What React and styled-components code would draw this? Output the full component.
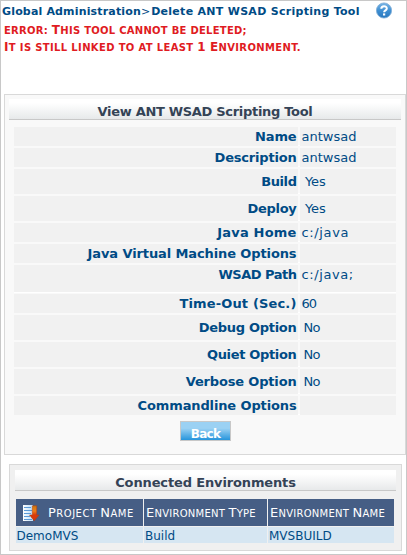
import React from 'react';
import styled, { createGlobalStyle } from 'styled-components';

const GlobalStyle = createGlobalStyle`
  * { box-sizing: border-box; }
  body { margin: 0; background: #fff; }
`;

const Page = styled.main`
  width: 407px;
  height: 555px;
  border: 1px solid #c8c8c8;
  font: 13px/18px Verdana, "DejaVu Sans", sans-serif;
  color: #004b85;
  overflow: hidden;
  white-space: nowrap;
`;
const TopBar = styled.header`
  display: flex;
  align-items: flex-start;
  height: 20px;
  padding-left: 1px;
  font-size: 11px;
  line-height: 20px;
`;
const Crumb = styled.b`
  padding-top: 1px;
  letter-spacing: ${(p) => p.$ls}px;
`;
const Separator = styled.span`
  padding-top: 1px;
  letter-spacing: 0.9px;
`;
const HelpButton = styled.a`
  display: flex;
  margin: 1px 0 0 16px;
`;
const ErrorBox = styled.div`
  height: 73px;
  padding: 1px 0 0 3px;
  font-size: 12px;
  font-weight: bold;
  line-height: 16px;
  color: #e01b22;
`;
const CapsLine = styled.span`
  display: ${(p) => (p.$block ? 'block' : 'inline')};
  letter-spacing: ${(p) => p.$ls}px;
`;
const Small = styled.span`
  font-size: ${(p) => p.$size}px;
  text-transform: uppercase;
`;
const Panel = styled.section`
  width: 402px;
  height: 361px;
  margin-left: 3px;
  padding: 4px;
  border: 1px solid #d9d9d9;
  background: #f9f9f9;
`;
const PanelTitle = styled.h2`
  margin: 0;
  height: ${(p) => p.$h}px;
  padding-top: 4px;
  border-bottom: 1px solid #c8c8c8;
  background: linear-gradient(#fff 20%, #e7e9ea);
  text-align: center;
  font-size: 13px;
  line-height: 18px;
  color: #344356;
  letter-spacing: ${(p) => p.$ls}px;
`;
const Fields = styled.dl`
  margin: 7px 5px 0;
`;
const Field = styled.div`
  display: grid;
  grid-template-columns: 284px 96px;
  column-gap: 2px;
  height: ${(p) => p.$h + 1}px;
  margin-bottom: ${(p) => (p.$tight ? 1 : 2)}px;
  border-bottom: 1px solid #fff;
  line-height: ${(p) => (p.$top ? 18 : p.$h)}px;
`;
const Label = styled.dt`
  padding: 1px 1.5px 0 0;
  background: #f1f1f1;
  font-weight: bold;
  text-align: right;
  letter-spacing: ${(p) => p.$ls}px;
`;
const Value = styled.dd`
  margin: 0;
  padding: 1px 0 0 ${(p) => p.$pad}px;
  background: #f1f1f1;
  letter-spacing: ${(p) => p.$ls}px;
`;
const BackButton = styled.button`
  display: block;
  width: 51px;
  height: 20px;
  margin: 6px 0 0 171px;
  padding: 4px 0 0 0;
  border: 1px solid #c8c8c8;
  background: linear-gradient(#9bd1f3 35%, #2795dc);
  color: #fff;
  font: bold 12px/16px Verdana, "DejaVu Sans", sans-serif;
  letter-spacing: -0.7px;
`;
const EnvPanel = styled.section`
  width: 393px;
  height: 87px;
  margin: 9px 0 0 8px;
  padding: 5px;
  border: 1px solid #d9d9d9;
  background: #f0f0f0;
`;
const EnvTable = styled.div`
  display: grid;
  grid-template-columns: 127px 123px 126px;
  grid-template-rows: 27px 16px;
  gap: 1px;
  margin: 8px 0 0 1px;
`;
const HeadCell = styled.div`
  display: flex;
  align-items: center;
  padding: 2px 0 0 ${(p) => p.$pad}px;
  background: #465e85;
  color: #fff;
`;
const Cell = styled.div`
  padding: 1px 0 0 ${(p) => p.$pad}px;
  background: #d6e6f2;
  font-size: 12px;
  line-height: 16px;
`;
const SortSvg = styled.svg`
  flex: none;
  margin: -2px 8px 0 6px;
`;

function SmallCaps({ text, size, ls, block }) {
  return (
    <CapsLine $ls={ls} $block={block}>
      {text.split(/([A-Z0-9]+)/).map((s, i) => (i % 2 ? s : s && <Small key={i} $size={size}>{s}</Small>))}
    </CapsLine>
  );
}

function HelpIcon() {
  return (
    <svg width="16" height="17" viewBox="0 0 16 17">
      <defs>
        <linearGradient id="help" x1="0" y1="0" x2="0" y2="1">
          <stop offset="0" stopColor="#79b5e6" />
          <stop offset=".5" stopColor="#3f8fd2" />
          <stop offset="1" stopColor="#2877be" />
        </linearGradient>
      </defs>
      <circle cx="8" cy="8.5" r="7.6" fill="url(#help)" stroke="#7eacd6" strokeWidth=".8" />
      <path d="M5.3 6.8C5.3 3.3 10.8 3.4 10.8 6.4C10.8 8.3 8.2 8.3 8.1 10.2" fill="none" stroke="#fff" strokeWidth="2" />
      <rect x="7" y="11.4" width="2.2" height="2.1" fill="#fff" />
    </svg>
  );
}

function SortIcon() {
  return (
    <SortSvg width="18" height="18" viewBox="0 0 18 18">
      <defs>
        <linearGradient id="arrow" x1="0" y1="0" x2="0" y2="1">
          <stop offset="0" stopColor="#c9790f" />
          <stop offset=".35" stopColor="#ee7d18" />
          <stop offset=".6" stopColor="#d83c0c" />
          <stop offset="1" stopColor="#d93408" />
        </linearGradient>
        <linearGradient id="sheet">
          <stop offset="0" stopColor="#fff" />
          <stop offset="1" stopColor="#b9dcf7" />
        </linearGradient>
      </defs>
      <rect x="1" y="1" width="10" height="16" fill="url(#sheet)" />
      <path d="M2 3.5H9M2 6.5H10M2 9.5H9M2 12.5H8M2 15.5H10" stroke="#5c9bd8" />
      <path d="M10.3 1.8H14.7V11H17L12.2 16.8L7.5 11H10.3Z" fill="url(#arrow)" stroke="#b83a0a" strokeWidth=".5" />
    </SortSvg>
  );
}

const fields = [
  { label: 'Name', ls: -0.13, value: 'antwsad', vls: 0, h: 18 },
  { label: 'Description', ls: -0.2, value: 'antwsad', vls: 0, h: 18 },
  { label: 'Build', ls: -0.44, value: 'Yes', vls: -0.1, h: 24, pad: 5 },
  { label: 'Deploy', ls: -0.3, value: 'Yes', vls: -0.1, h: 24, pad: 5 },
  { label: 'Java Home', ls: 0.19, value: 'c:/java', vls: 0.65, h: 18 },
  { label: 'Java Virtual Machine Options', ls: -0.11, value: '', h: 18 },
  { label: 'WSAD Path', ls: -0.49, value: 'c:/java;', vls: 0.6, h: 27, top: true, tight: true },
  { label: 'Time-Out (Sec.)', ls: 0.15, value: '60', vls: -1, h: 18 },
  { label: 'Debug Option', ls: -0.28, value: 'No', vls: -0.8, h: 24, pad: 3.5 },
  { label: 'Quiet Option', ls: -0.33, value: 'No', vls: -0.8, h: 24, pad: 3.5 },
  { label: 'Verbose Option', ls: -0.17, value: 'No', vls: -0.8, h: 24, pad: 3.5 },
  { label: 'Commandline Options', ls: -0.13, value: '', h: 18 },
];

export default function App() {
  return (
    <>
      <GlobalStyle />
      <Page>
        <TopBar>
          <Crumb $ls={0.164}>Global Administration</Crumb>
          <Separator>&gt;</Separator>
          <Crumb $ls={0.29}>Delete ANT WSAD Scripting Tool</Crumb>
          <HelpButton><HelpIcon /></HelpButton>
        </TopBar>
        <ErrorBox>
          <SmallCaps block size={10} ls={0.27} text="error: This tool cannot be deleted;" />
          <SmallCaps block size={10} ls={0.35} text="It is still linked to at least 1 Environment." />
        </ErrorBox>
        <Panel>
          <PanelTitle $ls={-0.306} $h={21}>View ANT WSAD Scripting Tool</PanelTitle>
          <Fields>
            {fields.map((f) => (
              <Field key={f.label} $h={f.h} $top={f.top} $tight={f.tight}>
                <Label $ls={f.ls}>{f.label}</Label>
                <Value $ls={f.vls || 0} $pad={f.pad || 1.5}>{f.value}</Value>
              </Field>
            ))}
          </Fields>
          <BackButton>Back</BackButton>
        </Panel>
        <EnvPanel>
          <PanelTitle $ls={-0.136} $h={21}>Connected Environments</PanelTitle>
          <EnvTable>
            <HeadCell $pad={0}><SortIcon /><SmallCaps size={10} ls={0.5} text="Project Name" /></HeadCell>
            <HeadCell $pad={2}><SmallCaps size={10} ls={0.25} text="Environment Type" /></HeadCell>
            <HeadCell $pad={2}><SmallCaps size={10} ls={0.25} text="Environment Name" /></HeadCell>
            <Cell $pad={0.5}>DemoMVS</Cell>
            <Cell $pad={1}>Build</Cell>
            <Cell $pad={1}>MVSBUILD</Cell>
          </EnvTable>
        </EnvPanel>
      </Page>
    </>
  );
}
